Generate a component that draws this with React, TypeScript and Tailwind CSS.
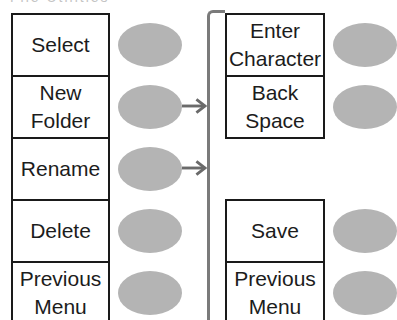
import React from "react";

const font = { fontFamily: '"Liberation Sans", Arial, sans-serif' };

function Oval() {
  return <div className="w-[64px] h-[44px] rounded-[50%] bg-[#b4b4b4] shrink-0" />;
}

function Cell({ lines, w }: { lines: string[]; w: string }) {
  return (
    <div
      className={`${w} h-[64px] border-2 border-[#1a1a1a] flex flex-col items-center justify-center text-[21px] leading-[28px] text-[#1c1c1c] bg-white shrink-0`}
    >
      {lines.map((l) => (
        <span key={l} className="whitespace-nowrap">{l}</span>
      ))}
    </div>
  );
}

function Arrow() {
  return (
    <svg width="26" height="20" viewBox="0 0 26 20" className="block">
      <line x1="0" y1="10" x2="24" y2="10" stroke="#6a6a6a" strokeWidth="3" />
      <polyline points="15,3 24,10 15,17" fill="none" stroke="#6a6a6a" strokeWidth="3" />
    </svg>
  );
}

export default function App() {
  const left = [["Select"], ["New", "Folder"], ["Rename"], ["Delete"], ["Previous", "Menu"]];
  const right: (string[] | null)[] = [["Enter", "Character"], ["Back", "Space"], null, ["Save"], ["Previous", "Menu"]];
  return (
    <div className="w-[397px] h-[320px] bg-white overflow-hidden" style={font}>
      <div className="h-[13px] pl-[10px] flex items-start">
        <div className="h-[4px] overflow-hidden">
          <div className="-mt-[10px] text-[14px] leading-[14px] text-[#c4c4c4] tracking-[2px]">File Utilities</div>
        </div>
      </div>
      <div className="flex pl-[11px]">
        <div className="flex flex-col">
          {left.map((l, i) => (
            <div key={i} className={`flex items-center ${i === 0 ? "" : "-mt-[2px]"}`}>
              <Cell lines={l} w="w-[99px]" />
              <div className="ml-[8px]">
                <Oval />
              </div>
            </div>
          ))}
        </div>
        <div className="flex">
          <div className="w-[25px] flex flex-col">
            <div className="h-[62px]" />
            <div className="h-[62px] flex items-center">
              <Arrow />
            </div>
            <div className="h-[62px] flex items-center">
              <Arrow />
            </div>
          </div>
          <div className="w-[18px] -mt-[3px] h-[340px] border-l-[3px] border-t-[3px] border-[#7a7a7a] rounded-tl-[6px]" />
        </div>
        <div className="flex flex-col">
          {right.map((r, i) => (
            <div key={i} className={`flex items-center h-[64px] ${i === 0 ? "" : "-mt-[2px]"}`}>
              {r ? (
                <>
                  <Cell lines={r} w="w-[100px]" />
                  <div className="ml-[8px]">
                    <Oval />
                  </div>
                </>
              ) : null}
            </div>
          ))}
        </div>
      </div>
    </div>
  );
}
